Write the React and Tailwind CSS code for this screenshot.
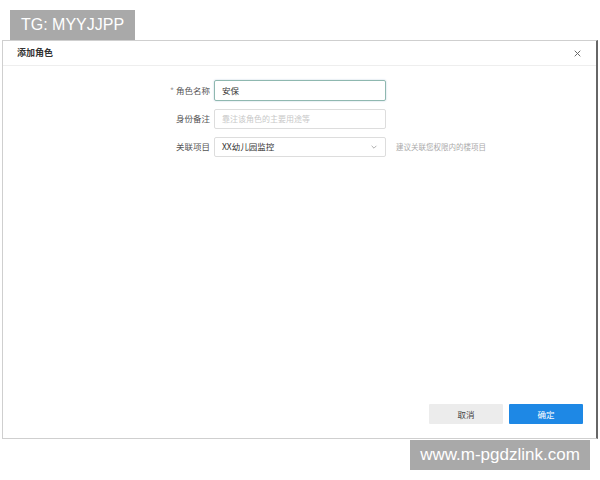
import React from 'react';

const font = { fontFamily: '"Noto Sans CJK SC", "Liberation Sans", sans-serif' };

function Row({ label, required, children, hint }) {
  return (
    <div className="flex items-center h-[21px]">
      <div className="w-[211px] pr-[4px] text-right text-[8.5px] text-[#555]">
        {required && <span className="text-[#999] mr-[2px]">*</span>}
        {label}
      </div>
      {children}
      {hint && <span className="ml-[10px] text-[7.5px] text-[#aaa]">{hint}</span>}
    </div>
  );
}

export default function App() {
  return (
    <div className="relative w-[600px] h-[480px] bg-white overflow-hidden" style={font}>
      {/* watermark top */}
      <div className="absolute left-[10px] top-[10px] w-[125px] h-[30px] bg-[#a9a9a9] text-white text-[16px] flex items-center justify-center z-10" style={{ fontFamily: '"Liberation Sans", sans-serif' }}>
        TG: MYYJJPP
      </div>

      <div className="ml-[2px] mt-[40px] w-[596px] h-[399px] border border-[#cfcfcf] border-r-[#666] border-r-2 flex flex-col">
        <div className="h-[25px] flex items-center justify-between pl-[14px] pr-[15px] border-b border-[#eee]">
          <span className="text-[9px] font-semibold text-[#333]">添加角色</span>
          <svg width="7" height="7" viewBox="0 0 10 10" stroke="#666" strokeWidth="1.4">
            <path d="M1 1 9 9M9 1 1 9" />
          </svg>
        </div>

        <div className="flex flex-col gap-[7px] mt-[14px]">
          <Row label="角色名称" required>
            <div className="w-[172px] h-[21px] border border-[#8fb8b0] rounded-[2px] flex items-center px-[7px] text-[8.5px] text-[#333] shadow-[0_0_2px_#bcd]">
              安保
            </div>
          </Row>
          <Row label="身份备注">
            <div className="w-[172px] h-[20px] border border-[#ddd] rounded-[2px] flex items-center px-[7px] text-[8px] text-[#c8c8c8]">
              靠注该角色的主要用途等
            </div>
          </Row>
          <Row label="关联项目" hint="建议关联您权限内的楼项目">
            <div className="w-[172px] h-[20px] border border-[#ddd] rounded-[2px] flex items-center justify-between px-[7px] text-[8.5px] text-[#333]">
              <span>XX幼儿园监控</span>
              <svg width="8" height="8" viewBox="0 0 10 10" fill="none" stroke="#aaa" strokeWidth="1.2">
                <path d="M2 3.5 5 6.5 8 3.5" />
              </svg>
            </div>
          </Row>
        </div>

        <div className="flex-1" />
        <div className="flex justify-end gap-[6px] pr-[13px] pb-[14px]">
          <button className="w-[74px] h-[20px] bg-[#ececec] text-[8.5px] text-[#444] rounded-[1px]">取消</button>
          <button className="w-[74px] h-[20px] bg-[#1e88e5] text-[8.5px] text-white rounded-[1px]">确定</button>
        </div>
      </div>

      {/* watermark bottom */}
      <div className="absolute left-[410px] top-[440px] w-[180px] h-[30px] bg-[#a9a9a9] text-white text-[17px] flex items-center justify-center z-10" style={{ fontFamily: '"Liberation Sans", sans-serif' }}>
        www.m-pgdzlink.com
      </div>
    </div>
  );
}
